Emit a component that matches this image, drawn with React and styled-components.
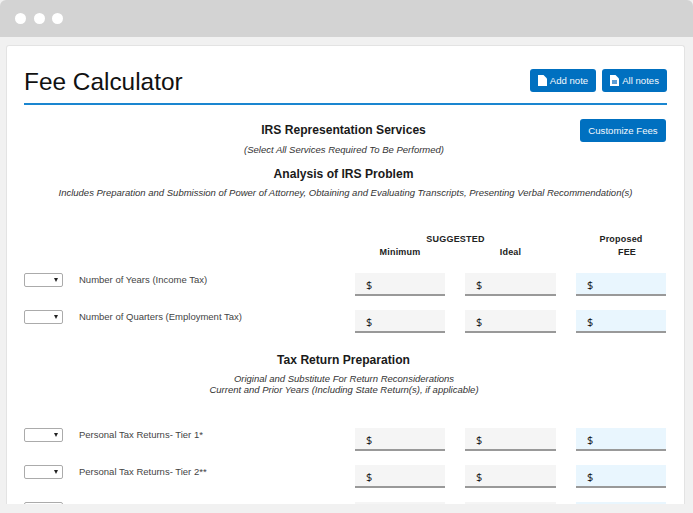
import React from 'react'
import styled, { createGlobalStyle } from 'styled-components'

const Global = createGlobalStyle`
  html, body {
    margin: 0;
    padding: 0;
    background: #f1f1f1;
    font-family: "Liberation Sans", Arial, sans-serif;
  }
`

const FileIcon = ({ lines }) => (
  <svg width="9" height="11" viewBox="0 0 9 11">
    <path d="M0 0H5.5L9 3.5V11H0Z" fill="#fff" />
    {lines && <path d="M2 5H7V9H2Z" fill="#5d9ed6" />}
  </svg>
)

const Row = ({ label, empty }) => (
  <FeeRow>
    <Select>
      <Arrow />
    </Select>
    <RowLabel>{label}</RowLabel>
    <Fields>
      <Field>{!empty && '$'}</Field>
      <Field>{!empty && '$'}</Field>
      <Field proposed>{!empty && '$'}</Field>
    </Fields>
  </FeeRow>
)

export default function App() {
  return (
    <Page>
      <Global />
      <TitleBar>
        <Dot />
        <Dot />
        <Dot />
      </TitleBar>
      <Card>
        <Header>
          <Title>Fee Calculator</Title>
          <Actions>
            <Button>
              <FileIcon />
              Add note
            </Button>
            <Button>
              <FileIcon lines />
              All notes
            </Button>
          </Actions>
        </Header>

        <Intro>
          <CustomizeButton>Customize Fees</CustomizeButton>
          <Heading>IRS Representation Services</Heading>
          <Note>(Select All Services Required To Be Performed)</Note>
          <Heading second>Analysis of IRS Problem</Heading>
          <WideNote>
            Includes Preparation and Submission of Power of Attorney, Obtaining and Evaluating
            Transcripts, Presenting Verbal Recommendation(s)
          </WideNote>
        </Intro>

        <ColumnHead>
          <Suggested>SUGGESTED</Suggested>
          <Proposed>
            Proposed
            <FeeWord>FEE</FeeWord>
          </Proposed>
          <SubHead>Minimum</SubHead>
          <SubHead>Ideal</SubHead>
        </ColumnHead>

        <Rows>
          <Row label="Number of Years (Income Tax)" />
          <Row label="Number of Quarters (Employment Tax)" />
        </Rows>

        <Section>
          <Heading>Tax Return Preparation</Heading>
          <SectionNote>
            Original and Substitute For Return Reconsiderations
            <br />
            Current and Prior Years (Including State Return(s), if applicable)
          </SectionNote>
        </Section>

        <Rows spaced>
          <Row label="Personal Tax Returns- Tier 1*" />
          <Row label="Personal Tax Returns- Tier 2**" />
          <Row empty />
        </Rows>
      </Card>
    </Page>
  )
}

const Page = styled.div`
  width: 693px;
  height: 513px;
  overflow: hidden;
  background: #f1f1f1;
`

const TitleBar = styled.div`
  height: 37px;
  padding: 0 15px;
  display: flex;
  align-items: center;
  gap: 7.5px;
  box-sizing: border-box;
  background: #d3d3d3;
  border-radius: 6px 6px 0 0;
`

const Dot = styled.span`
  width: 11px;
  height: 11px;
  border-radius: 50%;
  background: #fff;
`

const Card = styled.div`
  width: 679px;
  height: 459px;
  margin: 8px 0 0 6px;
  padding: 0 17px;
  box-sizing: border-box;
  overflow: hidden;
  background: #fff;
  border: 1px solid #e3e3e3;
  border-bottom: 0;
  border-radius: 3px 3px 0 0;
`

const Header = styled.div`
  height: 57px;
  display: flex;
  align-items: flex-end;
  justify-content: space-between;
  border-bottom: 2px solid #1a86d0;
`

const Title = styled.h1`
  margin: 0 0 5px;
  font-size: 24.4px;
  line-height: 32px;
  font-weight: 400;
  color: #111;
`

const Actions = styled.div`
  display: flex;
  gap: 6px;
  margin-bottom: 11px;
`

const Button = styled.button`
  height: 23px;
  padding: 0 8px;
  display: flex;
  align-items: center;
  gap: 3px;
  border: 0;
  border-radius: 3px;
  background: #0070c0;
  color: #f4f8fc;
  font-family: inherit;
  font-size: 9.6px;
`

const CustomizeButton = styled(Button)`
  position: absolute;
  top: 14px;
  right: 1px;
  width: 86px;
  justify-content: center;
  padding: 0;
`

const Intro = styled.div`
  position: relative;
  padding-top: 17px;
  text-align: center;
`

const Heading = styled.div`
  margin-top: ${props => (props.second ? '11px' : '0')};
  padding-right: 4px;
  font-size: 12.1px;
  line-height: 17px;
  font-weight: 700;
  color: #1a1a1a;
`

const Note = styled.div`
  margin-top: 5px;
  padding-right: 3px;
  font-size: 9.5px;
  line-height: 11px;
  font-style: italic;
  color: #333;
`

const WideNote = styled(Note)`
  margin-top: 4px;
  padding-right: 0;
`

const SectionNote = styled(Note)`
  margin-top: 4px;
`

const ColumnHead = styled.div`
  display: grid;
  grid-template-columns: 90px 91px 90px;
  column-gap: 20px;
  justify-content: end;
  padding: 35px 1px 0 0;
  font-size: 9px;
  line-height: 13px;
  font-weight: 700;
  letter-spacing: 0.2px;
  color: #222;
  text-align: center;
`

const Suggested = styled.div`
  grid-column: 1 / span 2;
`

const Proposed = styled.div`
  grid-column: 3;
  grid-row: 1 / span 2;
`

const FeeWord = styled.div`
  padding-left: 12px;
`

const SubHead = styled.div`
  grid-row: 2;
`

const Rows = styled.div`
  display: flex;
  flex-direction: column;
  gap: 14px;
  margin-top: ${props => (props.spaced ? '33px' : '14px')};
`

const FeeRow = styled.div`
  display: flex;
  align-items: flex-start;
  padding-right: 1px;
`

const Select = styled.div`
  width: 39px;
  height: 14px;
  margin-right: 16px;
  position: relative;
  box-sizing: border-box;
  border: 1px solid #ababab;
  border-radius: 2px;
  background: #fff;
`

const Arrow = styled.span`
  position: absolute;
  right: 4px;
  top: 4px;
  border-left: 2.5px solid transparent;
  border-right: 2.5px solid transparent;
  border-top: 4px solid #222;
`

const RowLabel = styled.div`
  flex: 1;
  font-size: 9.5px;
  line-height: 14px;
  color: #444;
`

const Fields = styled.div`
  display: grid;
  grid-template-columns: 90px 91px 90px;
  column-gap: 20px;
`

const Field = styled.div`
  height: 23px;
  padding: 3px 0 0 11px;
  box-sizing: border-box;
  border-bottom: 2px solid #999;
  background: ${props => (props.proposed ? '#e9f6fe' : '#f5f5f5')};
  font-family: "Open Sans", sans-serif;
  font-size: 11px;
  line-height: 18px;
  color: #111;
`

const Section = styled.div`
  margin-top: 19px;
  text-align: center;
`
